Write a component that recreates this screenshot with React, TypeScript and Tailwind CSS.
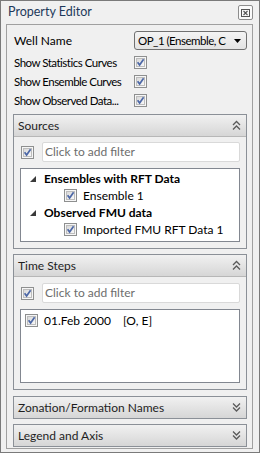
import React from "react";

function Check() {
  return (
    <svg width="13" height="13" viewBox="0 0 13 13" className="shrink-0">
      <defs>
        <linearGradient id="cbg" x1="0" y1="0" x2="1" y2="1">
          <stop offset="0" stopColor="#d6d6d6" />
          <stop offset="1" stopColor="#fbfbfb" />
        </linearGradient>
      </defs>
      <rect x="0.5" y="0.5" width="12" height="12" fill="#f6f6f6" stroke="#8e8f8f" />
      <rect x="2.5" y="2.5" width="8" height="8" fill="url(#cbg)" stroke="#bdbdbd" />
      <path d="M3.6 6.3 L5.6 9 L9.6 3.2" stroke="#4c67a6" strokeWidth="1.7" fill="none" />
    </svg>
  );
}

function Chevrons({ down }: { down?: boolean }) {
  return (
    <svg width="9" height="11" viewBox="0 0 9 11" className="shrink-0">
      {down ? (
        <g stroke="#5a5a5a" strokeWidth="1.3" fill="none">
          <path d="M1 1.5 L4.5 5 L8 1.5" />
          <path d="M1 5.5 L4.5 9 L8 5.5" />
        </g>
      ) : (
        <g stroke="#5a5a5a" strokeWidth="1.3" fill="none">
          <path d="M1 5 L4.5 1.5 L8 5" />
          <path d="M1 9.5 L4.5 6 L8 9.5" />
        </g>
      )}
    </svg>
  );
}

function Expander() {
  return (
    <svg width="6" height="6" viewBox="0 0 6 6" className="shrink-0">
      <path d="M6 0 L6 6 L0 6 Z" fill="#3a3a3a" />
    </svg>
  );
}

function GroupHeader({ title, down }: { title: string; down?: boolean }) {
  return (
    <div className="h-[21px] flex items-center justify-between pl-[4px] pr-[5px] bg-gradient-to-b from-[#f1f1f1] to-[#d6d6d6] text-[#1e1e1e]">
      <span>{title}</span>
      <Chevrons down={down} />
    </div>
  );
}

function FilterRow() {
  return (
    <div className="flex items-center h-[20px] pl-[7px] pr-[6px] gap-[8px]">
      <Check />
      <div className="flex-1 h-[20px] bg-white border border-[#d9d9d9] rounded-[2px] flex items-center pl-[2px] text-[#6d6d6d]">
        Click to add filter
      </div>
    </div>
  );
}

export default function App() {
  return (
    <div className="w-[260px] h-[453px] bg-[#f0f0f0] border border-[#7a7a7a] font-['Lato',sans-serif] text-[12px] text-black flex flex-col leading-none">
      <div className="h-[23px] shrink-0 flex items-center justify-between pl-[7px] pr-[6px] text-[#1e395b]">
        <span className="text-[12.5px]">Property Editor</span>
        <div className="w-[15px] h-[15px] border border-[#8d8d8d] rounded-[2px] bg-[#fafafa] flex items-center justify-center">
          <svg width="9" height="8" viewBox="0 0 9 8">
            <rect x="0.5" y="0.5" width="8" height="7" fill="none" stroke="#555" />
            <path d="M2.5 2 L6.5 6 M6.5 2 L2.5 6" stroke="#555" strokeWidth="1.1" />
          </svg>
        </div>
      </div>
      <div className="ml-[5px] mr-[6px] mb-[3px] flex-1 border border-[#a0a0a0] bg-[#f0f0f0] pl-[6px] pr-[5px] pt-[6px] flex flex-col">
        <div className="flex items-center justify-between h-[19px]">
          <span className="pl-[1px]">Well Name</span>
          <div className="w-[113px] h-[19px] border border-[#707070] rounded-[3px] bg-gradient-to-b from-[#f4f4f4] to-[#e3e3e3] flex items-center pl-[3px] pr-[5px] justify-between">
            <span className="whitespace-nowrap tracking-[-0.5px] text-[11.5px]">OP_1 (Ensemble, C</span>
            <svg width="7" height="4" viewBox="0 0 7 4" className="shrink-0 ml-[2px]">
              <path d="M0 0 L7 0 L3.5 4 Z" fill="#000" />
            </svg>
          </div>
        </div>
        <div className="mt-[3px] flex flex-col">
          {["Show Statistics Curves", "Show Ensemble Curves", "Show Observed Data..."].map((t) => (
            <div key={t} className="flex items-center h-[19px]">
              <span className="w-[121px] shrink-0 pl-[1px] whitespace-nowrap tracking-[-0.5px] text-[11.5px]">{t}</span>
              <Check />
            </div>
          ))}
        </div>
        <div className="mt-[4px] border border-[#8b9097] bg-[#f0f0f0] flex flex-col">
          <div className="border-b border-[#b7b7b7]">
            <GroupHeader title="Sources" />
          </div>
          <div className="pt-[5px] pb-[6px] flex flex-col">
            <FilterRow />
            <div className="mt-[6px] mx-[6px] h-[74px] border border-[#828790] bg-white flex flex-col pt-[1px]">
              <div className="h-[17px] flex items-center pl-[9px] gap-[8px] font-bold">
                <Expander />
                <span>Ensembles with RFT Data</span>
              </div>
              <div className="h-[17px] flex items-center pl-[43px] gap-[6px]">
                <Check />
                <span>Ensemble 1</span>
              </div>
              <div className="h-[17px] flex items-center pl-[9px] gap-[8px] font-bold">
                <Expander />
                <span>Observed FMU data</span>
              </div>
              <div className="h-[17px] flex items-center pl-[43px] gap-[6px]">
                <Check />
                <span>Imported FMU RFT Data 1</span>
              </div>
            </div>
          </div>
        </div>
        <div className="mt-[5px] border border-[#8b9097] bg-[#f0f0f0] flex flex-col">
          <div className="border-b border-[#b7b7b7]">
            <GroupHeader title="Time Steps" />
          </div>
          <div className="pt-[6px] pb-[6px] flex flex-col">
            <FilterRow />
            <div className="mt-[6px] mx-[6px] h-[74px] border border-[#828790] bg-white flex flex-col pt-[2px]">
              <div className="h-[17px] flex items-center pl-[4px]">
                <Check />
                <span className="ml-[6px] w-[79px]">01.Feb 2000</span>
                <span>[O, E]</span>
              </div>
            </div>
          </div>
        </div>
        <div className="mt-[6px] border border-[#8b9097]">
          <GroupHeader title="Zonation/Formation Names" down />
        </div>
        <div className="mt-[5px] border border-[#8b9097]">
          <GroupHeader title="Legend and Axis" down />
        </div>
      </div>
    </div>
  );
}
